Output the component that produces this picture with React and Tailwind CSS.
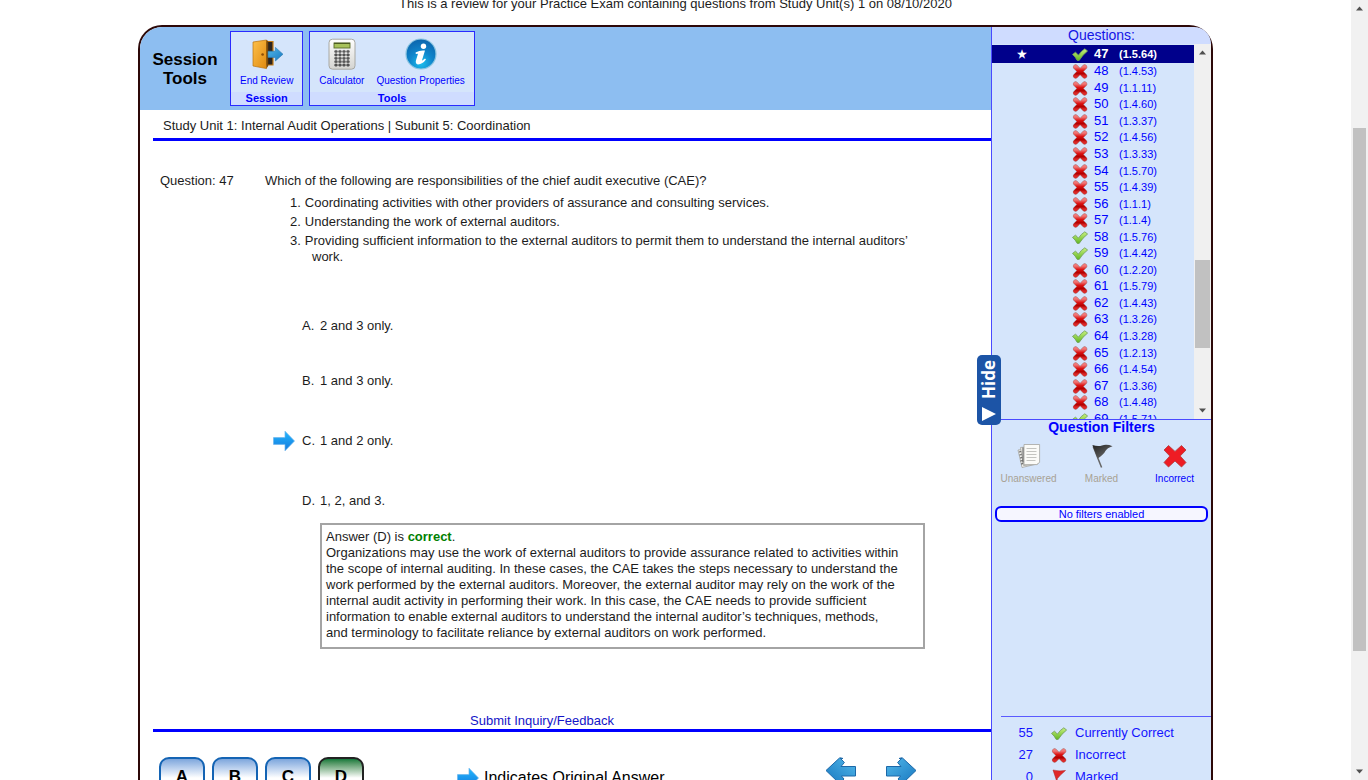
import React from "react";

const X = "cross";
const V = "check";
const questions = [
  [48, "1.4.53", X], [49, "1.1.11", X], [50, "1.4.60", X], [51, "1.3.37", X],
  [52, "1.4.56", X], [53, "1.3.33", X], [54, "1.5.70", X], [55, "1.4.39", X],
  [56, "1.1.1", X], [57, "1.1.4", X], [58, "1.5.76", V], [59, "1.4.42", V],
  [60, "1.2.20", X], [61, "1.5.79", X], [62, "1.4.43", X], [63, "1.3.26", X],
  [64, "1.3.28", V], [65, "1.2.13", X], [66, "1.4.54", X], [67, "1.3.36", X],
  [68, "1.4.48", X], [69, "1.5.71", V],
];

function Gradients() {
  return (
    <svg className="absolute h-0 w-0" aria-hidden="true">
      <defs>
        <linearGradient id="red" x1="0" y1="0" x2="0" y2="1">
          <stop offset="0" stopColor="#f07878" />
          <stop offset="0.4" stopColor="#dc1010" />
          <stop offset="0.75" stopColor="#b00000" />
          <stop offset="1" stopColor="#dc2828" />
        </linearGradient>
        <linearGradient id="green" x1="0" y1="0" x2="0" y2="1">
          <stop offset="0" stopColor="#c8f080" />
          <stop offset="1" stopColor="#62b822" />
        </linearGradient>
        <linearGradient id="door" x1="0" y1="0" x2="1" y2="1">
          <stop offset="0" stopColor="#fdc04a" />
          <stop offset="1" stopColor="#e08a10" />
        </linearGradient>
        <linearGradient id="sky" x1="0" y1="0" x2="0" y2="1">
          <stop offset="0" stopColor="#22b8ff" />
          <stop offset="1" stopColor="#1478dc" />
        </linearGradient>
        <linearGradient id="steel" x1="0" y1="0" x2="1" y2="1">
          <stop offset="0" stopColor="#52b8ea" />
          <stop offset="1" stopColor="#1878c0" />
        </linearGradient>
        <linearGradient id="case" x1="0" y1="0" x2="0" y2="1">
          <stop offset="0" stopColor="#ffffff" />
          <stop offset="1" stopColor="#d4d4d0" />
        </linearGradient>
        <radialGradient id="info" cx="0.5" cy="0.8" r="0.75">
          <stop offset="0" stopColor="#1cc0ee" />
          <stop offset="0.5" stopColor="#0f86cc" />
          <stop offset="1" stopColor="#0c68b0" />
        </radialGradient>
        <linearGradient id="flag" x1="0" y1="0" x2="1" y2="1">
          <stop offset="0" stopColor="#222222" />
          <stop offset="0.6" stopColor="#555555" />
          <stop offset="1" stopColor="#111111" />
        </linearGradient>
      </defs>
    </svg>
  );
}

function Cross({ className = "h-4 w-4 shrink-0" }) {
  return (
    <svg viewBox="0 0 16 16" className={className} fill="none" strokeLinecap="round" aria-hidden="true">
      <path d="M3.6 4 12.6 13M12.6 4 3.6 13" stroke="#a87878" strokeWidth="5.2" />
      <path d="M3.6 4 12.6 13M12.6 4 3.6 13" stroke="url(#red)" strokeWidth="4.4" />
    </svg>
  );
}

function Check({ className = "h-4 w-4 shrink-0" }) {
  return (
    <svg viewBox="0 0 16 16" className={className} aria-hidden="true">
      <path d="M.5 8.4 3.4 6.2Q5 7.2 6.4 9.200Q9 5 12.800 2.800L15.600 5Q10.500 9 7.200 14.400L5.200 14.400Q3.400 10.800 .5 8.400Z" fill="url(#green)" stroke="#6e9c58" strokeWidth="0.8" />
    </svg>
  );
}

function DoorIcon() {
  return (
    <svg viewBox="0 0 32 32" className="h-8 w-8" aria-hidden="true">
      <path d="M12 3.5H22V27H12z" fill="#2b2420" stroke="#c67c14" strokeWidth="1.2" />
      <path d="M2 4 15.5 2V30.6L2 28z" fill="url(#door)" stroke="#b87412" strokeWidth="0.7" />
      <path d="M15.5 2V30.6L17.2 28V3z" fill="#7c4a08" />
      <circle cx="11.6" cy="16.5" r="1.3" fill="#8a4c08" />
      <path d="M17 13.2H24.4V9.4L32 16.2 24.4 23V19.4H17z" fill="url(#steel)" stroke="#2b78ae" strokeWidth="0.6" />
    </svg>
  );
}

function CalculatorIcon() {
  return (
    <svg viewBox="0 0 32 32" className="h-8 w-8" aria-hidden="true">
      <rect x="3" y="1.2" width="26" height="30" rx="3.5" fill="url(#case)" stroke="#a8a8a2" strokeWidth="1" />
      <rect x="8" y="5" width="16" height="5" fill="#a8c25a" stroke="#586a28" strokeWidth="0.9" />
      <path d="M8 5.4h16" stroke="#4c5c20" strokeWidth="1.2" />
      {[12.4, 15.8, 19.2, 22.6, 26].map((y) =>
        [8.6, 12.6, 16.6, 20.6].map((x) => (
          <rect key={x + "-" + y} x={x} y={y} width="2.8" height="2.2" rx="0.8" fill="#5c5c5c" stroke="#333333" strokeWidth="0.4" />
        ))
      )}
    </svg>
  );
}

function InfoIcon() {
  return (
    <svg viewBox="0 0 32 32" className="h-8 w-8" aria-hidden="true">
      <circle cx="16" cy="16" r="15" fill="url(#info)" stroke="#8ac4e0" strokeWidth="1.2" />
      <circle cx="18.500" cy="8.200" r="2.700" fill="#fff" />
      <path d="M10.6 14.4Q15.500 11.800 20 12.600L17 22.200Q17.400 23 20 20.600L21 21.600Q17.600 26.400 13 26.400 10 25.800 11 22.200L13 15.800 10.800 15.900Z" fill="#fff" />
    </svg>
  );
}

function PagesIcon() {
  return (
    <svg viewBox="1 1 24 24" className="h-6 w-6" aria-hidden="true">
      <g stroke="#a4a4a0" strokeWidth="0.8" fill="#f2f2ee">
        <path d="M2 7 19 5 21 21 6 24.5z" />
        <path d="M4.500 4.500 20 3 22 21 7.500 22.600z" />
        <path d="M8 1.500H23.600V19.400L20.600 21.600H8z" fill="#fbfbf8" />
      </g>
      <path d="M10.500 5.500h10M10.500 8.500h10M10.500 11.500h10M10.500 14.500h10M10.500 17.500h9" stroke="#c4c4c0" strokeWidth="1" />
      <path d="M3 9l2.200-.4M3.400 12l2.200-.4M4 15l2.200-.4M4.400 18l2.200-.4M5 21l2.200-.4M7 4.500v15" stroke="#555" strokeWidth="1" />
    </svg>
  );
}

function FlagIcon() {
  return (
    <svg viewBox="1 1 24 24" className="h-6 w-6" aria-hidden="true">
      <path d="M4.200 3.500 12.600 24.500" stroke="#666" strokeWidth="1.500" />
      <path d="M3.400 2Q9 3.600 13 2.400 18 1 23.600 3.200 18 5 16.400 8 15 11.400 8.600 15.400z" fill="url(#flag)" />
    </svg>
  );
}

function BigCross() {
  return (
    <svg viewBox="0 0 24 24" className="h-6 w-6" aria-hidden="true">
      <path d="M5.500 1.500 12 7.400 18.500 1.500 23 6 17.200 12 23 18.500 18.500 23 12 17 5.500 23 1 18.500 6.800 12 1 6z" fill="#ee1c24" stroke="#b03838" strokeWidth="0.8" strokeLinejoin="round" />
    </svg>
  );
}

function RedFlag() {
  return (
    <svg viewBox="0 0 16 16" className="h-4 w-4" aria-hidden="true">
      <path d="M2 1Q8 2.500 14.500 1.500 9 6 6 10L8.500 16 7 16z" fill="#e02828" stroke="#a82020" strokeWidth="0.5" />
    </svg>
  );
}

function AnswerArrow() {
  return (
    <svg viewBox="0 0 24 24" className="h-6 w-6 shrink-0" aria-hidden="true">
      <path d="M1.500 8.600H13V2.200L22.500 12 13 21.800V15.400H1.500z" fill="url(#sky)" stroke="#6cb4ec" strokeWidth="0.7" />
    </svg>
  );
}

function NavArrow({ flip }) {
  return (
    <svg viewBox="0 0 32 28" className={flip ? "h-7 w-8 -scale-x-100" : "h-7 w-8"} aria-hidden="true">
      <path d="M14 1.500 17.500 1 31 13.500 17.500 26.500 13 22 15.600 19H1.500V9.500H16L12.600 5.500 17 1z" fill="url(#steel)" stroke="#1c68a8" strokeWidth="1" />
    </svg>
  );
}

function ScrollArrow({ down }) {
  return (
    <svg viewBox="0 0 17 17" className="h-[17px] w-[17px] shrink-0" aria-hidden="true">
      <path d={down ? "M5 6.500h7L8.500 10.500z" : "M5 10.500h7L8.500 6.500z"} fill="#505050" />
    </svg>
  );
}

function ToolButton({ icon, children }) {
  return (
    <button className="flex flex-col items-center gap-[3px] text-[10px] leading-4 text-[#0000ff]">
      {icon}
      <span>{children}</span>
    </button>
  );
}

function ToolGroup({ title, children }) {
  return (
    <div className="flex flex-col border border-[#2a2aff] bg-[#d5e5fb]">
      <div className="flex flex-1 gap-3 px-[9px] pt-1.5">{children}</div>
      <h2 className="bg-[#cfdcff] text-center text-[11px] leading-[13px] font-bold text-[#0000ff]">{title}</h2>
    </div>
  );
}

function Choice({ letter, text, chosen, className }) {
  return (
    <li className={"flex items-center " + className}>
      <span className="flex w-[37px] pl-[7px]">{chosen && <AnswerArrow />}</span>
      <span className="w-[18px]">{letter}.</span>
      <span>{text}</span>
    </li>
  );
}

function QuestionRow({ number, code, status, selected }) {
  return (
    <li className={selected ? "mt-px h-[18px] bg-[#00008b] font-bold text-white" : "text-[#0000ff]"}>
      <button className="flex h-full w-full items-center pl-[25px]">
        <span className="w-[55px] text-left text-[11px] leading-4">{selected ? "★" : ""}</span>
        {status === V ? <Check /> : <Cross />}
        <span className="ml-1.5 w-[25px] text-left text-[13px] leading-4">{number}</span>
        <span className="text-[11px] leading-4">({code})</span>
      </button>
    </li>
  );
}

function Filter({ icon, label, active }) {
  return (
    <button className={active ? "flex flex-col items-center gap-[3px] text-[#0000ff]" : "flex flex-col items-center gap-[3px] text-[#a8a294]"}>
      {icon}
      <span className="text-[10px] leading-4">{label}</span>
    </button>
  );
}

function Stat({ count, icon, label }) {
  return (
    <li className="flex h-4 items-center">
      <span className="w-[32px] text-right">{count}</span>
      <span className="flex w-[42px] justify-center pl-2.5">{icon}</span>
      <span>{label}</span>
    </li>
  );
}

function LetterButton({ letter, correct }) {
  return (
    <button
      className={
        correct
          ? "h-[46px] w-[46px] rounded-[10px] border-2 border-[#222] bg-linear-to-b from-[#0c7a3c] to-white to-45% pb-1.5 text-[17px] font-bold"
          : "h-[46px] w-[46px] rounded-[10px] border-2 border-[#1464b4] bg-linear-to-b from-[#7ea6dc] to-white to-45% pb-1.5 text-[17px] font-bold"
      }
    >
      {letter}
    </button>
  );
}

export default function App() {
  return (
    <div className="flex h-screen overflow-hidden bg-white font-['Liberation_Sans',Arial,sans-serif] text-[13px] leading-4 text-[#1c1c1c]">
      <Gradients />
      <div className="flex min-w-0 flex-1 flex-col">
        <p className="-mt-1 h-[29px] shrink-0 text-center">
          This is a review for your Practice Exam containing questions from Study Unit(s) 1 on 08/10/2020
        </p>
        <div className="mx-auto flex w-full max-w-[1075px] flex-1 rounded-t-[24px] border-2 border-b-0 border-[#2c0808]">
          <main className="min-w-0 flex-1">
            <header className="flex h-[83px] gap-1.5 rounded-tl-[22px] bg-[#8dbef1] py-1 pl-1.5">
              <h1 className="flex w-[78px] items-center justify-center text-center text-[17px] leading-[19px] font-bold text-black">
                Session<br />Tools
              </h1>
              <ToolGroup title="Session">
                <ToolButton icon={<DoorIcon />}>End Review</ToolButton>
              </ToolGroup>
              <ToolGroup title="Tools">
                <ToolButton icon={<CalculatorIcon />}>Calculator</ToolButton>
                <ToolButton icon={<InfoIcon />}>Question Properties</ToolButton>
              </ToolGroup>
            </header>
            <div className="pl-[13px]">
              <p className="border-b-[3px] border-[#0000ff] pt-2 pb-1 pl-2.5">
                Study Unit 1: Internal Audit Operations | Subunit 5: Coordination
              </p>
              <section className="flex pt-8 pl-[7px]">
                <h2 className="w-[105px] shrink-0">Question: 47</h2>
                <div className="w-[660px]">
                  <p>Which of the following are responsibilities of the chief audit executive (CAE)?</p>
                  <ol className="mt-1.5 flex flex-col gap-[3px] pl-[25px]">
                    <li className="pl-[22px] -indent-[22px]"><span className="pr-1">1.</span>Coordinating activities with other providers of assurance and consulting services.</li>
                    <li className="pl-[22px] -indent-[22px]"><span className="pr-1">2.</span>Understanding the work of external auditors.</li>
                    <li className="pl-[22px] -indent-[22px]"><span className="pr-1">3.</span>Providing sufficient information to the external auditors to permit them to understand the internal auditors’ work.</li>
                  </ol>
                  <ol className="flex flex-col">
                    <Choice letter="A" text="2 and 3 only." className="mt-[53px] h-4" />
                    <Choice letter="B" text="1 and 3 only." className="mt-[39px] h-4" />
                    <Choice letter="C" text="1 and 2 only." chosen className="mt-11 h-4" />
                    <Choice letter="D" text="1, 2, and 3." className="mt-11 h-4" />
                  </ol>
                  <div className="mt-3.5 ml-[55px] border-2 border-[#a4a4a4] pt-1 pr-[22px] pb-1.5 pl-1">
                    <p>Answer (D) is <b className="text-[#008000]">correct</b>.</p>
                    <p>Organizations may use the work of external auditors to provide assurance related to activities within the scope of internal auditing. In these cases, the CAE takes the steps necessary to understand the work performed by the external auditors. Moreover, the external auditor may rely on the work of the internal audit activity in performing their work. In this case, the CAE needs to provide sufficient information to enable external auditors to understand the internal auditor’s techniques, methods, and terminology to facilitate reliance by external auditors on work performed.</p>
                  </div>
                </div>
              </section>
              <div className="mt-16 border-b-[3px] border-[#0000ff] pr-[60px] text-center">
                <a href="#feedback" className="text-[#1414c8]">Submit Inquiry/Feedback</a>
              </div>
              <footer className="flex items-start pt-[25px] pl-1.5 text-black">
                <div className="flex gap-[7px]">
                  <LetterButton letter="A" />
                  <LetterButton letter="B" />
                  <LetterButton letter="C" />
                  <LetterButton letter="D" correct />
                </div>
                <p className="ml-[92px] flex items-center gap-1 pt-[9px] text-base leading-6"><AnswerArrow />Indicates Original Answer</p>
                <div className="mr-[74px] ml-auto flex gap-7">
                  <button aria-label="Previous question"><NavArrow flip /></button>
                  <button aria-label="Next question"><NavArrow /></button>
                </div>
              </footer>
            </div>
          </main>

          <aside className="relative flex w-[220px] shrink-0 flex-col rounded-tr-[22px] border-l border-[#4a4aff] bg-[#d5e5fb]">
            <h2 className="h-[17px] rounded-tr-[22px] bg-[#cfdcff] text-center text-[14px] text-[#1414e6]">Questions:</h2>
            <div className="flex h-[375px]">
              <div className="flex-1 overflow-hidden">
                <ul>
                  <QuestionRow number={47} code="1.5.64" status={V} selected />
                </ul>
                <ul className="grid h-[364px] auto-rows-fr">
                  {questions.map(([number, code, status]) => (
                    <QuestionRow key={number} number={number} code={code} status={status} />
                  ))}
                </ul>
              </div>
              <div className="flex w-[17px] flex-col bg-[#f0f0f0]">
                <ScrollArrow />
                <div className="mx-px mt-[199px] h-[88px] bg-[#c1c1c1]" />
                <div className="mt-auto"><ScrollArrow down /></div>
              </div>
            </div>
            <section className="border-t border-[#4a4aff]">
              <h2 className="text-center text-[14px] leading-[14px] font-bold text-[#0000ff]">Question Filters</h2>
              <div className="mt-2.5 grid grid-cols-3">
                <Filter icon={<PagesIcon />} label="Unanswered" />
                <Filter icon={<FlagIcon />} label="Marked" />
                <Filter icon={<BigCross />} label="Incorrect" active />
              </div>
              <p className="mx-[3px] mt-[19px] rounded-md border-2 border-[#0000ff] bg-[#f6f6ff] text-center text-[11px] leading-3 text-[#0000ff]">No filters enabled</p>
            </section>
            <ul className="mt-[194px] ml-[9px] flex flex-col gap-1.5 border-t border-[#5a5aff] pt-2 text-[#1414ff]">
              <Stat count="55" icon={<Check />} label="Currently Correct" />
              <Stat count="27" icon={<Cross />} label="Incorrect" />
              <Stat count="0" icon={<RedFlag />} label="Marked" />
            </ul>
            <button className="absolute top-[328px] -left-[15px] flex h-[70px] w-6 flex-col items-center justify-between rounded-[5px] bg-[#1c54a6] pt-[5px] pb-1 text-white">
              <span className="rotate-180 font-['Open_Sans',sans-serif] text-[17px] leading-6 font-bold [writing-mode:vertical-rl]">Hide</span>
              <svg viewBox="0 0 14 14" className="h-3.5 w-3.5" aria-hidden="true"><path d="M0 0 14 7 0 14z" fill="#fff" /></svg>
            </button>
          </aside>
        </div>
      </div>
      <div className="flex w-[17px] shrink-0 flex-col bg-[#f1f1f1]">
        <ScrollArrow />
        <div className="mx-[2px] mt-[111px] h-[523px] bg-[#c1c1c1]" />
        <div className="mt-auto"><ScrollArrow down /></div>
      </div>
    </div>
  );
}
